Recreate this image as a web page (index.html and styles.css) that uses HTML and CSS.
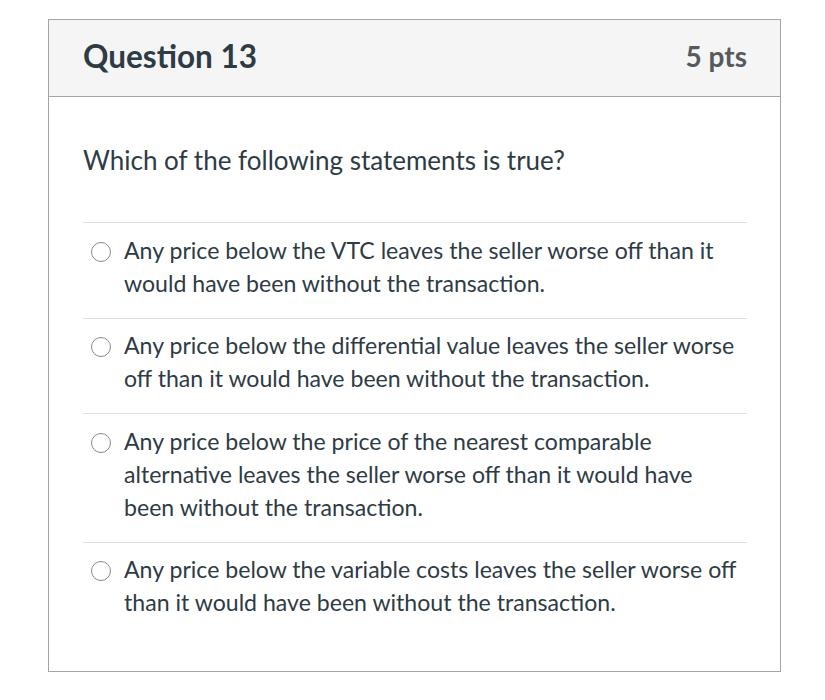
FILE: index.html
```html
<!DOCTYPE html>
<html>
<head>
<meta charset="utf-8">
<link rel="stylesheet" href="styles.css">
</head>
<body>
<div class="question">
  <div class="q-header">
    <h2 class="q-title">Question 13</h2>
    <span class="q-pts">5 pts</span>
  </div>
  <div class="q-body">
    <p class="q-text">Which of the following statements is true?</p>
    <div class="answers">
      <label class="answer"><span class="radio"></span><span class="a-text">Any price below the VTC leaves the seller worse off than it would have been without the transaction.</span></label>
      <label class="answer"><span class="radio"></span><span class="a-text">Any price below the differential value leaves the seller worse off than it would have been without the transaction.</span></label>
      <label class="answer"><span class="radio"></span><span class="a-text">Any price below the price of the nearest comparable alternative leaves the seller worse off than it would have been without the transaction.</span></label>
      <label class="answer"><span class="radio"></span><span class="a-text">Any price below the variable costs leaves the seller worse off than it would have been without the transaction.</span></label>
    </div>
  </div>
</div>
</body>
</html>
```

FILE: styles.css
```css
html, body { margin: 0; padding: 0; background: #fff; }
body {
  font-family: Lato, "Liberation Sans", sans-serif;
  color: #2d3b45;
  padding: 19px 0 0 48px;
}
.question {
  border: 1px solid #a5a5a5;
  box-sizing: border-box;
  width: 733px;
  height: 653px;
}
.q-header {
  background: #f5f5f5;
  border-bottom: 1px solid #a5a5a5;
  box-sizing: border-box;
  height: 77px;
  display: flex;
  align-items: center;
  justify-content: space-between;
  padding: 0 33px 4px 34px;
}
.q-title {
  margin: 0;
  font-size: 31.5px;
  font-weight: 700;
  color: #2d3b45;
}
.q-pts {
  font-size: 28px;
  font-weight: 700;
  color: #555a5e;
}
.q-body {
  padding: 0 33px 0 34px;
}
.q-text {
  margin: 0;
  padding-top: 46px;
  font-size: 26px;
  line-height: 34px;
  height: 125px;
  box-sizing: border-box;
}
.answer {
  display: flex;
  align-items: flex-start;
  border-top: 1px solid #e0e0e0;
  padding: 10.5px 5px 18px 8px;
  font-size: 23.1px;
  line-height: 33px;
}
.radio {
  flex: none;
  width: 20px;
  height: 20px;
  border: 1px solid #8a8a8a;
  border-radius: 50%;
  margin: 8px 13px 0 0;
  box-sizing: border-box;
}
.a-text { flex: 1; color: #2d3b45; }
```
